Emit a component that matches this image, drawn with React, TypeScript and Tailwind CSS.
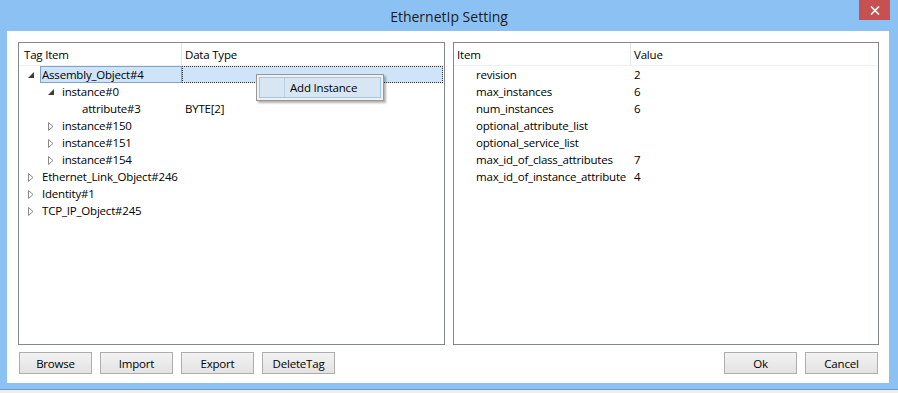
import React from "react";

type Node = { level: number; state: "open" | "closed" | "leaf"; name: string; type?: string; selected?: boolean };

const tree: Node[] = [
  { level: 0, state: "open", name: "Assembly_Object#4", selected: true },
  { level: 1, state: "open", name: "instance#0" },
  { level: 2, state: "leaf", name: "attribute#3", type: "BYTE[2]" },
  { level: 1, state: "closed", name: "instance#150" },
  { level: 1, state: "closed", name: "instance#151" },
  { level: 1, state: "closed", name: "instance#154" },
  { level: 0, state: "closed", name: "Ethernet_Link_Object#246" },
  { level: 0, state: "closed", name: "Identity#1" },
  { level: 0, state: "closed", name: "TCP_IP_Object#245" },
];

const props: [string, string][] = [
  ["revision", "2"],
  ["max_instances", "6"],
  ["num_instances", "6"],
  ["optional_attribute_list", ""],
  ["optional_service_list", ""],
  ["max_id_of_class_attributes", "7"],
  ["max_id_of_instance_attribute", "4"],
];

const indent: Record<number, string> = { 0: "pl-[0px]", 1: "pl-[20px]", 2: "pl-[40px]" };

function Arrow({ state }: { state: Node["state"] }) {
  if (state === "leaf") return <span className="w-[23px] shrink-0" />;
  return (
    <span className="w-[23px] shrink-0 flex items-center pl-[9px] pt-[1px]">
      {state === "open" ? (
        <svg width="6" height="6" viewBox="0 0 6 6">
          <polygon points="6,0 6,6 0,6" fill="#3c3c3c" />
        </svg>
      ) : (
        <svg width="6" height="9" viewBox="0 0 6 9">
          <polygon points="0.5,0.5 5,4.5 0.5,8.5" fill="none" stroke="#8a8a8a" strokeWidth="1" />
        </svg>
      )}
    </span>
  );
}

function Btn({ label }: { label: string }) {
  return (
    <button className="w-[73px] h-[22px] border border-[#adadad] bg-gradient-to-b from-[#f2f2f2] to-[#e3e3e3] text-[11.5px] tracking-[-0.2px] leading-none text-black flex items-center justify-center pt-[1px]">
      {label}
    </button>
  );
}

export default function App() {
  return (
    <div
      className="w-[898px] h-[393px] bg-[#8cc2f3] flex flex-col overflow-hidden relative"
      style={{ fontFamily: '"Segoe UI", "Open Sans", sans-serif' }}
    >
      {/* title bar */}
      <div className="h-[31px] shrink-0 flex items-center justify-center relative">
        <span className="text-[14px] text-[#1b1b1b] pt-[2px]">EthernetIp Setting</span>
        <div className="absolute right-[8px] top-0 w-[31px] h-[20px] bg-[#c75050] flex items-center justify-center">
          <svg width="10" height="9" viewBox="0 0 10 9">
            <path d="M1 0.5 L9 8.5 M9 0.5 L1 8.5" stroke="#fff" strokeWidth="1.6" />
          </svg>
        </div>
      </div>

      {/* client */}
      <div className="ml-[7px] w-[882px] h-[352px] shrink-0 bg-white pl-[11px] pt-[11px] flex flex-col relative">
        <div className="flex gap-[8px] h-[303px]">
          {/* left panel */}
          <div className="w-[427px] h-full border border-[#828790] flex flex-col text-[11.5px] tracking-[-0.2px] text-black">
            <div className="h-[23px] flex items-center border-b border-[#f0f0f0]">
              <div className="w-[163px] h-full flex items-center pl-[5px] pt-[1px] border-r border-[#e5e5e5]">Tag Item</div>
              <div className="pl-[3px] pt-[1px]">Data Type</div>
            </div>
            {tree.map((n, i) => (
              <div key={i} className="h-[17px] flex">
                <div className={`w-[163px] h-full flex ${indent[n.level]}`}>
                  <Arrow state={n.state} />
                  {n.selected ? (
                    <div className="flex-1 -ml-[2px] h-full border border-[#7da2ce] bg-[#cfe4f9] flex items-center pl-[1px] pt-[1px] whitespace-nowrap">
                      {n.name}
                    </div>
                  ) : (
                    <div className="h-full flex items-center pt-[1px] whitespace-nowrap">{n.name}</div>
                  )}
                </div>
                {n.selected ? (
                  <div className="flex-1 h-full border border-dotted border-[#333] bg-[#cfe4f9] mr-[1px]" />
                ) : (
                  <div className="flex-1 h-full flex items-center pl-[3px] pt-[1px]">{n.type ?? ""}</div>
                )}
              </div>
            ))}
          </div>

          {/* right panel */}
          <div className="w-[426px] h-full border border-[#828790] flex flex-col text-[11.5px] tracking-[-0.2px] text-black">
            <div className="h-[23px] flex items-center border-b border-[#f0f0f0]">
              <div className="w-[177px] h-full flex items-center pl-[3px] pt-[1px] border-r border-[#e5e5e5]">Item</div>
              <div className="pl-[3px] pt-[1px]">Value</div>
            </div>
            {props.map(([k, v], i) => (
              <div key={i} className="h-[17px] flex items-center pt-[1px]">
                <div className="w-[177px] pl-[22px] whitespace-nowrap">{k}</div>
                <div className="pl-[3px]">{v}</div>
              </div>
            ))}
          </div>
        </div>

        {/* buttons */}
        <div className="mt-[7px] flex pr-[11px]">
          <div className="flex gap-[8px] pl-[1px]">
            <Btn label="Browse" />
            <Btn label="Import" />
            <Btn label="Export" />
            <Btn label="DeleteTag" />
          </div>
          <div className="ml-auto flex gap-[8px]">
            <Btn label="Ok" />
            <Btn label="Cancel" />
          </div>
        </div>

        {/* context menu */}
        <div className="absolute left-[249px] top-[43px] w-[128px] h-[27px] bg-[#f0f0f0] border border-[#979797] shadow-[2px_2px_2px_rgba(0,0,0,0.3)] p-[2px]">
          <div className="h-full border border-[#a8c4e2] bg-[#d8e6f4] flex items-center relative">
            <div className="w-[25px] h-full border-r border-[#b9cde2]" />
            <span className="pl-[5px] pt-[1px] text-[11.5px] tracking-[-0.2px] text-black">Add Instance</span>
          </div>
        </div>
      </div>

      {/* bottom frame */}
      <div className="h-[6px] shrink-0" />
      <div className="h-[1px] shrink-0 bg-[#6b9dd0]" />
      <div className="flex-1 bg-[#eeeeee]" />
    </div>
  );
}
